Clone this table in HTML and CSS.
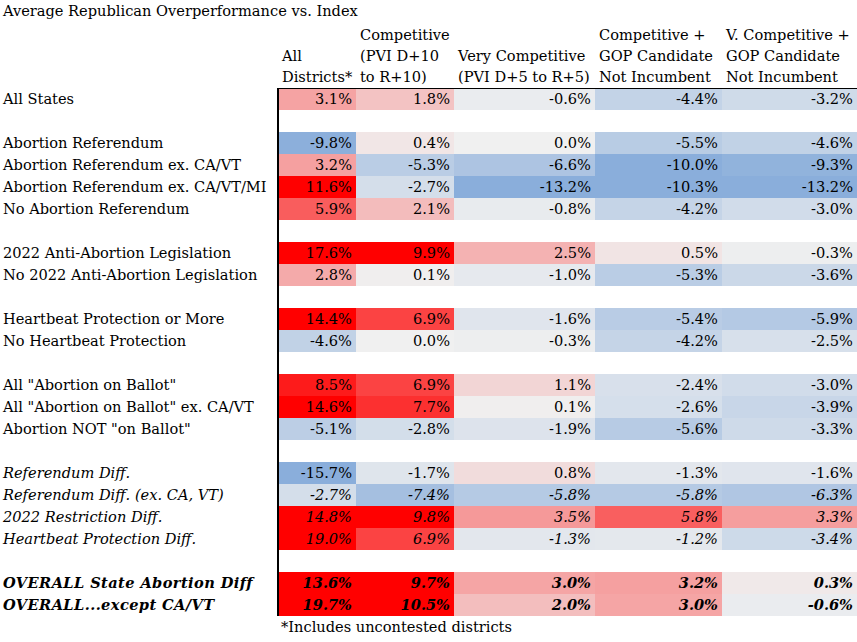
FILE: index.html
```html
<!DOCTYPE html>
<html lang="en">
<head>
<meta charset="utf-8">
<title>Average Republican Overperformance vs. Index</title>
<link rel="stylesheet" href="styles.css">
</head>
<body>
<div class="sheet">
  <div class="title">Average Republican Overperformance vs. Index</div>
  <div class="row head">
    <div class="h"></div>
    <div class="h">All<br>Districts*</div>
    <div class="h">Competitive<br>(PVI D+10<br>to R+10)</div>
    <div class="h">Very Competitive<br>(PVI D+5 to R+5)</div>
    <div class="h">Competitive +<br>GOP Candidate<br>Not Incumbent</div>
    <div class="h">V. Competitive +<br>GOP Candidate<br>Not Incumbent</div>
  </div>

  <div class="row first">
    <div class="lab">All States</div>
    <div class="c c1">3.1%</div><div class="c">1.8%</div><div class="c">-0.6%</div><div class="c">-4.4%</div><div class="c">-3.2%</div>
  </div>
  <div class="row"><div class="lab"></div><div class="c1 gap"></div></div>

  <div class="row">
    <div class="lab">Abortion Referendum</div>
    <div class="c c1">-9.8%</div><div class="c">0.4%</div><div class="c">0.0%</div><div class="c">-5.5%</div><div class="c">-4.6%</div>
  </div>
  <div class="row">
    <div class="lab">Abortion Referendum ex. CA/VT</div>
    <div class="c c1">3.2%</div><div class="c">-5.3%</div><div class="c">-6.6%</div><div class="c">-10.0%</div><div class="c">-9.3%</div>
  </div>
  <div class="row">
    <div class="lab">Abortion Referendum ex. CA/VT/MI</div>
    <div class="c c1">11.6%</div><div class="c">-2.7%</div><div class="c">-13.2%</div><div class="c">-10.3%</div><div class="c">-13.2%</div>
  </div>
  <div class="row">
    <div class="lab">No Abortion Referendum</div>
    <div class="c c1">5.9%</div><div class="c">2.1%</div><div class="c">-0.8%</div><div class="c">-4.2%</div><div class="c">-3.0%</div>
  </div>
  <div class="row"><div class="lab"></div><div class="c1 gap"></div></div>

  <div class="row">
    <div class="lab">2022 Anti-Abortion Legislation</div>
    <div class="c c1">17.6%</div><div class="c">9.9%</div><div class="c">2.5%</div><div class="c">0.5%</div><div class="c">-0.3%</div>
  </div>
  <div class="row">
    <div class="lab">No 2022 Anti-Abortion Legislation</div>
    <div class="c c1">2.8%</div><div class="c">0.1%</div><div class="c">-1.0%</div><div class="c">-5.3%</div><div class="c">-3.6%</div>
  </div>
  <div class="row"><div class="lab"></div><div class="c1 gap"></div></div>

  <div class="row">
    <div class="lab">Heartbeat Protection or More</div>
    <div class="c c1">14.4%</div><div class="c">6.9%</div><div class="c">-1.6%</div><div class="c">-5.4%</div><div class="c">-5.9%</div>
  </div>
  <div class="row">
    <div class="lab">No Heartbeat Protection</div>
    <div class="c c1">-4.6%</div><div class="c">0.0%</div><div class="c">-0.3%</div><div class="c">-4.2%</div><div class="c">-2.5%</div>
  </div>
  <div class="row"><div class="lab"></div><div class="c1 gap"></div></div>

  <div class="row">
    <div class="lab">All "Abortion on Ballot"</div>
    <div class="c c1">8.5%</div><div class="c">6.9%</div><div class="c">1.1%</div><div class="c">-2.4%</div><div class="c">-3.0%</div>
  </div>
  <div class="row">
    <div class="lab">All "Abortion on Ballot" ex. CA/VT</div>
    <div class="c c1">14.6%</div><div class="c">7.7%</div><div class="c">0.1%</div><div class="c">-2.6%</div><div class="c">-3.9%</div>
  </div>
  <div class="row">
    <div class="lab">Abortion NOT "on Ballot"</div>
    <div class="c c1">-5.1%</div><div class="c">-2.8%</div><div class="c">-1.9%</div><div class="c">-5.6%</div><div class="c">-3.3%</div>
  </div>
  <div class="row"><div class="lab"></div><div class="c1 gap"></div></div>

  <div class="row">
    <div class="lab it">Referendum Diff.</div>
    <div class="c c1">-15.7%</div><div class="c">-1.7%</div><div class="c">0.8%</div><div class="c">-1.3%</div><div class="c">-1.6%</div>
  </div>
  <div class="row it">
    <div class="lab">Referendum Diff. (ex. CA, VT)</div>
    <div class="c c1">-2.7%</div><div class="c">-7.4%</div><div class="c">-5.8%</div><div class="c">-5.8%</div><div class="c">-6.3%</div>
  </div>
  <div class="row it">
    <div class="lab">2022 Restriction Diff.</div>
    <div class="c c1">14.8%</div><div class="c">9.8%</div><div class="c">3.5%</div><div class="c">5.8%</div><div class="c">3.3%</div>
  </div>
  <div class="row it">
    <div class="lab">Heartbeat Protection Diff.</div>
    <div class="c c1">19.0%</div><div class="c">6.9%</div><div class="c">-1.3%</div><div class="c">-1.2%</div><div class="c">-3.4%</div>
  </div>
  <div class="row"><div class="lab"></div><div class="c1 gap"></div></div>

  <div class="row bi">
    <div class="lab">OVERALL State Abortion Diff</div>
    <div class="c c1">13.6%</div><div class="c">9.7%</div><div class="c">3.0%</div><div class="c">3.2%</div><div class="c">0.3%</div>
  </div>
  <div class="row bi">
    <div class="lab">OVERALL...except CA/VT</div>
    <div class="c c1">19.7%</div><div class="c">10.5%</div><div class="c">2.0%</div><div class="c">3.0%</div><div class="c">-0.6%</div>
  </div>
  <div class="row">
    <div class="lab"></div>
    <div class="note">*Includes uncontested districts</div>
  </div>
</div>
<script src="script.js"></script>
</body>
</html>
```

FILE: styles.css
```css
* { box-sizing: border-box; }
body {
  margin: 0;
  background: #fff;
  color: #000;
  font-family: "DejaVu Serif", serif;
  font-size: 14.6px;
}
.sheet { width: 857px; }
.title {
  height: 22px;
  line-height: 22px;
  padding-left: 3px;
  white-space: nowrap;
}
.row {
  display: grid;
  grid-template-columns: 277px 79px 98px 141px 127px 135px;
  height: 22px;
  line-height: 22px;
}
.head {
  height: 66px;
  line-height: 21px;
  align-items: end;
}
.h {
  padding: 0 0 1px 4px;
  white-space: nowrap;
}
.h:nth-child(2) { padding-left: 5px; }
.lab {
  padding-left: 3px;
  white-space: nowrap;
}
.c {
  text-align: right;
  padding-right: 4px;
  white-space: nowrap;
}
.c1 { border-left: 2px solid #000; }
.first .c { border-top: 1px solid #000; line-height: 20px; }
.it .lab, .it .c, .lab.it { font-style: italic; }
.bi .lab, .bi .c { font-style: italic; font-weight: bold; }
.bi .lab { letter-spacing: 0.4px; }
.note {
  grid-column: 2 / -1;
  padding-left: 4px;
  white-space: nowrap;
}
```

FILE: script.js
```js
(function () {
  var base = [240, 240, 240];
  var red = [255, 0, 0];
  var blue = [138, 174, 219];
  document.querySelectorAll('.c').forEach(function (el) {
    var v = parseFloat(el.textContent);
    if (isNaN(v)) return;
    var end, t;
    if (v >= 0) { end = red; t = Math.min(v / 9.6, 1); }
    else { end = blue; t = Math.min(-v / 10, 1); }
    var rgb = base.map(function (b, i) { return Math.round(b + (end[i] - b) * t); });
    el.style.backgroundColor = 'rgb(' + rgb.join(',') + ')';
  });
})();
```
